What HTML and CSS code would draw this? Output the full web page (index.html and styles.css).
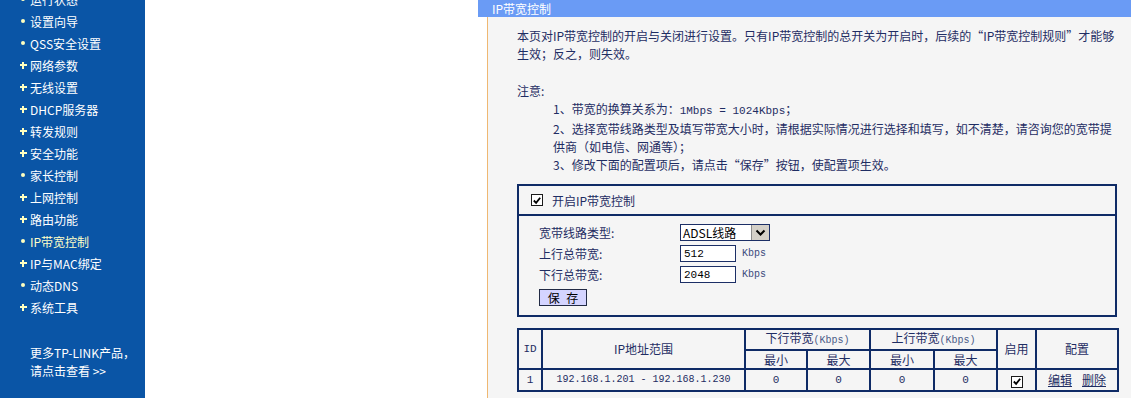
FILE: index.html
```html
<!DOCTYPE html>
<html lang="zh-CN">
<head>
    <meta charset="UTF-8">
    <title>IP带宽控制</title>
    <link rel="stylesheet" href="styles.css">
</head>
<body>

    <!-- Left menu -->
    <div class="sidebar">
        <ul class="menu">
            <li><span class="mark"><i class="dot"></i></span>运行状态</li>
            <li><span class="mark"><i class="dot"></i></span>设置向导</li>
            <li><span class="mark"><i class="dot"></i></span>QSS安全设置</li>
            <li><span class="mark"><i class="plus"></i></span>网络参数</li>
            <li><span class="mark"><i class="plus"></i></span>无线设置</li>
            <li><span class="mark"><i class="plus"></i></span>DHCP服务器</li>
            <li><span class="mark"><i class="plus"></i></span>转发规则</li>
            <li><span class="mark"><i class="plus"></i></span>安全功能</li>
            <li><span class="mark"><i class="dot"></i></span>家长控制</li>
            <li><span class="mark"><i class="plus"></i></span>上网控制</li>
            <li><span class="mark"><i class="plus"></i></span>路由功能</li>
            <li class="active"><span class="mark"><i class="dot"></i></span>IP带宽控制</li>
            <li><span class="mark"><i class="plus"></i></span>IP与MAC绑定</li>
            <li><span class="mark"><i class="dot"></i></span>动态DNS</li>
            <li><span class="mark"><i class="plus"></i></span>系统工具</li>
        </ul>
        <div class="more">
            更多TP-LINK产品，<br>
            请点击查看 &gt;&gt;
        </div>
    </div>

    <div class="gap"></div>

    <!-- Main frame -->
    <div class="main">
        <div class="titlebar">IP带宽控制</div>
        <div class="content">
            <p class="intro">
                本页对IP带宽控制的开启与关闭进行设置。只有IP带宽控制的总开关为开启时，后续的“IP带宽控制规则”才能够<br>
                生效；反之，则失效。
            </p>
            <p class="note-title">注意:</p>
            <div class="notes">
                1、带宽的换算关系为：<span class="en">1Mbps = 1024Kbps</span>；<br>
                2、选择宽带线路类型及填写带宽大小时，请根据实际情况进行选择和填写，如不清楚，请咨询您的宽带提<br>
                供商（如电信、网通等）；<br>
                3、修改下面的配置项后，请点击“保存”按钮，使配置项生效。
            </div>

            <div class="box">
                <div class="box-head">
                    <span class="chk"><svg width="11" height="11" viewBox="0 0 11 11"><path d="M2 5.5 L4.5 8 L9 2.5" fill="none" stroke="#000" stroke-width="2"/></svg></span>
                    开启IP带宽控制
                </div>
                <div class="box-body">
                    <div class="row">
                        <span class="label">宽带线路类型:</span>
                        <div class="select">
                            <span class="select-text">ADSL线路</span>
                            <span class="select-btn"><svg width="11" height="8" viewBox="0 0 11 8"><path d="M1.5 1.5 L5.5 5.5 L9.5 1.5" fill="none" stroke="#000" stroke-width="2"/></svg></span>
                        </div>
                    </div>
                    <div class="row">
                        <span class="label">上行总带宽:</span>
                        <input class="field" type="text" value="512">
                        <span class="unit">Kbps</span>
                    </div>
                    <div class="row">
                        <span class="label">下行总带宽:</span>
                        <input class="field" type="text" value="2048">
                        <span class="unit">Kbps</span>
                    </div>
                    <button class="save">保&nbsp;存</button>
                </div>
            </div>

            <table class="rules">
                <colgroup>
                    <col style="width:24px">
                    <col style="width:203px">
                    <col style="width:62px">
                    <col style="width:63px">
                    <col style="width:64px">
                    <col style="width:63px">
                    <col style="width:39px">
                    <col style="width:82px">
                </colgroup>
                <tr class="h1">
                    <td rowspan="2" class="en">ID</td>
                    <td rowspan="2">IP地址范围</td>
                    <td colspan="2">下行带宽<span class="small">(Kbps)</span></td>
                    <td colspan="2">上行带宽<span class="small">(Kbps)</span></td>
                    <td rowspan="2">启用</td>
                    <td rowspan="2">配置</td>
                </tr>
                <tr class="h2">
                    <td>最小</td>
                    <td>最大</td>
                    <td>最小</td>
                    <td>最大</td>
                </tr>
                <tr class="data">
                    <td class="en">1</td>
                    <td class="ip">192.168.1.201 - 192.168.1.230</td>
                    <td class="en">0</td>
                    <td class="en">0</td>
                    <td class="en">0</td>
                    <td class="en">0</td>
                    <td><span class="chk"><svg width="11" height="11" viewBox="0 0 11 11"><path d="M2 5.5 L4.5 8 L9 2.5" fill="none" stroke="#000" stroke-width="2"/></svg></span></td>
                    <td><a href="#">编辑</a><a href="#">删除</a></td>
                </tr>
            </table>
        </div>
    </div>

</body>
</html>
```

FILE: styles.css
```css
/* General */
* {
    margin: 0;
    padding: 0;
    box-sizing: border-box;
}

body {
    display: flex;
    height: 100vh;
    overflow: hidden;
    background: #ffffff;
    font-family: "Noto Sans CJK SC", sans-serif;
    font-size: 12px;
    color: #1f2d63;
}

/* Sidebar */
.sidebar {
    width: 145px;
    flex-shrink: 0;
    background-color: #0a55a6;
    color: #ffffff;
    overflow: hidden;
}

.menu {
    list-style: none;
    margin-top: -12px;
}

.menu li {
    display: flex;
    align-items: center;
    height: 22px;
    padding-left: 19px;
}

.menu li.active {
    color: #ffffc8;
}

.mark {
    width: 11px;
    display: flex;
    align-items: center;
    justify-content: center;
    padding-right: 3px;
}

.dot {
    display: block;
    width: 4px;
    height: 4px;
    border-radius: 2px;
    background: #ffffc0;
}

.plus {
    display: block;
    width: 7px;
    height: 7px;
    background:
        linear-gradient(#ffffc0, #ffffc0) center / 7px 2px no-repeat,
        linear-gradient(#ffffc0, #ffffc0) center / 2px 7px no-repeat;
}

.more {
    margin-top: 26px;
    padding-left: 30px;
    line-height: 18px;
}

.gap {
    width: 333px;
    flex-shrink: 0;
}

/* Main frame */
.main {
    flex: 1;
    display: flex;
    flex-direction: column;
    min-width: 0;
}

.titlebar {
    height: 17px;
    line-height: 17px;
    padding-left: 14px;
    background: #6a9bf5;
    color: #ffffff;
}

.content {
    flex: 1;
    margin-left: 9px;
    border-left: 1px solid #efb872;
    background: #f5f5f5;
    padding: 10px 0 0 29px;
}

.intro {
    line-height: 18px;
    white-space: nowrap;
}

.note-title {
    margin-top: 19px;
    line-height: 18px;
}

.notes {
    margin-left: 36px;
    line-height: 18px;
    white-space: nowrap;
}

.en {
    font-family: "Liberation Mono", monospace;
    font-size: 11px;
}

/* Switch box */
.box {
    width: 600px;
    margin-top: 10px;
    border: 2px solid #0f2b66;
}

.box-head {
    display: flex;
    align-items: center;
    height: 30px;
    padding-left: 12px;
    border-bottom: 2px solid #0f2b66;
}

.chk {
    display: inline-flex;
    align-items: center;
    justify-content: center;
    width: 12px;
    height: 12px;
    border: 1px solid #1a1a1a;
    background: #ffffff;
    margin-right: 9px;
}

.box-body {
    padding: 6px 0 9px 20px;
}

.row {
    display: flex;
    align-items: center;
    height: 21px;
}

.label {
    width: 141px;
}

.select {
    display: flex;
    width: 90px;
    height: 17px;
    border: 1px solid #1c2f66;
    background: #ffffff;
}

.select-text {
    flex: 1;
    line-height: 15px;
    padding-left: 2px;
    color: #000000;
}

.select-btn {
    width: 18px;
    display: flex;
    align-items: center;
    justify-content: center;
    background: #d4d0c8;
    border-left: 1px solid #8c8c8c;
}

.field {
    width: 56px;
    height: 17px;
    border: 1px solid #1c2f66;
    background: #ffffff;
    padding-left: 3px;
    font-family: "Liberation Mono", monospace;
    font-size: 11px;
    color: #000000;
    outline: none;
}

.unit {
    margin-left: 6px;
    font-family: "Liberation Mono", monospace;
    font-size: 10px;
    color: #3a4a7c;
}

.save {
    display: block;
    margin-top: 4px;
    width: 48px;
    height: 17px;
    border: 1px solid #222a44;
    background: #d4d4ff;
    font-family: "Noto Sans CJK SC", sans-serif;
    font-size: 12px;
    color: #000000;
    line-height: 15px;
    word-spacing: 4px;
}

/* Rules table */
.rules {
    width: 600px;
    margin-top: 11px;
    border-collapse: collapse;
    table-layout: fixed;
    border: 2px solid #0f2b66;
}

.rules td {
    border: 2px solid #0f2b66;
    text-align: center;
    line-height: 16px;
    padding: 0;
}

.rules .h1 td {
    height: 21px;
}

.rules .h2 td {
    height: 19px;
}

.rules .data td {
    height: 22px;
}

.rules .chk {
    margin-right: 0;
    vertical-align: middle;
}

.small {
    font-family: "Liberation Mono", monospace;
    font-size: 10px;
    color: #4a5a88;
}

.ip {
    font-family: "Liberation Mono", monospace;
    font-size: 10px;
}

.rules a {
    color: #1f2d63;
    margin: 0 5px;
}
```
